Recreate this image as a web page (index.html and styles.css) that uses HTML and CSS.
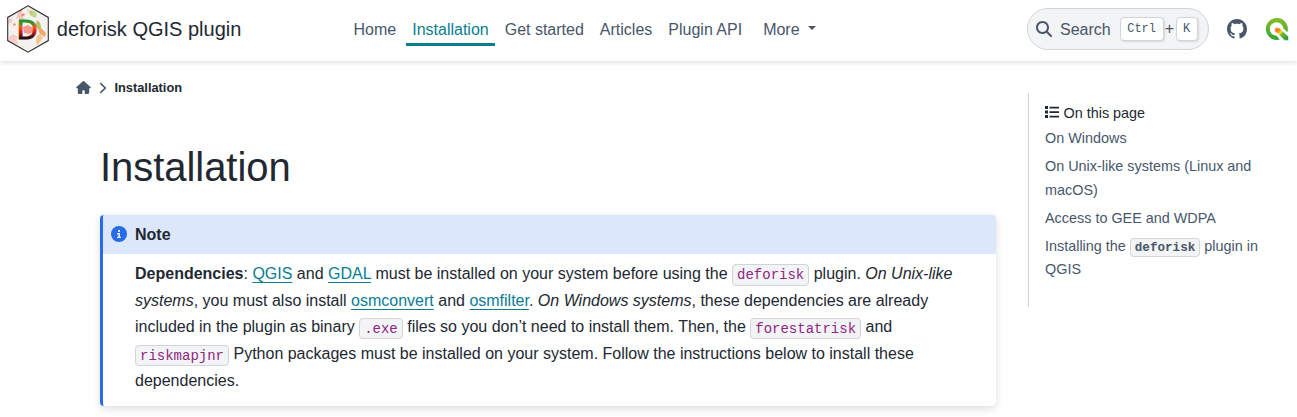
FILE: index.html
```html
<!DOCTYPE html>
<html lang="en">
<head>
<meta charset="utf-8">
<title>Installation — deforisk QGIS plugin</title>
<link rel="stylesheet" href="styles.css">
</head>
<body>
<header class="header">
  <a class="brand">
    <svg class="logo" viewBox="0 0 42 48">
      <defs>
        <linearGradient id="d-fill" gradientUnits="userSpaceOnUse" x1="0" y1="13.500" x2="0" y2="34.500">
          <stop offset="0" stop-color="#0e9a3a"/><stop offset="0.2" stop-color="#3a8f1c"/>
          <stop offset="0.42" stop-color="#f0560c"/><stop offset="0.62" stop-color="#d81c10"/>
          <stop offset="0.95" stop-color="#200a0a"/>
        </linearGradient>
        <clipPath id="hex"><path d="M21 .8 41.300 12.400V35.600L21 47.200.7 35.600V12.400z"/></clipPath>
        <filter id="soft"><feGaussianBlur stdDeviation=".5"/></filter>
      </defs>
      <g clip-path="url(#hex)">
        <path d="M0 0h42v48H0z" fill="#f4f2ee"/>
        <g filter="url(#soft)">
          <path d="M11 8l3-2 2 3-1 3 3 2-4 2-3-3-2 1z" fill="#f9c3bb"/>
          <path d="M1 14l3-1 2 2-2 3-3 1zM2 32l4-3 5 3-2 3 3 4-5-1-5-3z" fill="#f6cbc9"/>
          <path d="M14 10l3-2 1 2-3 2zM6 19l2-1 1 2-2 1zM12 5l2-1 1 2-2 1z" fill="#f38e80"/>
          <path d="M20 3l3 2 3 5-2 1-4-4z" fill="#e2e8c4"/>
          <path d="M25 5l4 2 1 4-2 2-4-2-2-3z" fill="#b9dc92"/>
          <path d="M23 5l2 1 1 3-2 1z" fill="#f6af72"/>
          <path d="M30 15l3 3 1 5 5 5-1 4-5-3-2-5-3-3z" fill="#f4a868"/>
          <path d="M31 16l2 2 1 5-2 1-2-4z" fill="#a2cc70"/>
          <path d="M30 31l3-2 3 4-3 4-3 3-1-4z" fill="#f9c48a"/>
          <path d="M16 22l5-2 5 3v4l-4 2-5-1z" fill="#f29a90"/>
        </g>
      </g>
      <text x="9.900" y="34" textLength="20.500" lengthAdjust="spacingAndGlyphs" class="logo-letter" fill="url(#d-fill)" stroke="url(#d-fill)" stroke-width=".9">D</text>
      <path d="M21 .8 41.300 12.400V35.600L21 47.200.7 35.600V12.400z" fill="none" stroke="#302f2d" stroke-width="1.100"/>
    </svg>
    <span>deforisk QGIS plugin</span>
  </a>
  <nav class="nav">
    <a>Home</a><a class="current">Installation</a><a>Get started</a><a>Articles</a><a>Plugin API</a><a class="more">More<i class="caret"></i></a>
  </nav>
  <div class="tools">
    <div class="search">
      <svg class="glass" viewBox="0 0 512 512"><path fill="currentColor" d="M416 208c0 45.900-14.900 88.300-40 122.700L502.600 457.400c12.500 12.500 12.500 32.800 0 45.300s-32.800 12.500-45.300 0L330.700 376c-34.400 25.200-76.800 40-122.700 40C93.100 416 0 322.900 0 208S93.100 0 208 0S416 93.100 416 208zM208 352a144 144 0 1 0 0-288 144 144 0 1 0 0 288z"/></svg>
      <span class="search-label">Search</span>
      <kbd>Ctrl</kbd><span class="plus">+</span><kbd>K</kbd>
    </div>
    <svg class="github" viewBox="0 0 16 16"><path fill="currentColor" d="M8 0C3.580 0 0 3.580 0 8c0 3.540 2.290 6.530 5.470 7.590.4.070.55-.17.55-.38 0-.19-.01-.82-.01-1.490-2.010.37-2.530-.49-2.690-.94-.09-.23-.48-.94-.82-1.130-.28-.15-.68-.52-.01-.53.63-.01 1.080.58 1.230.82.72 1.210 1.870.87 2.330.66.07-.52.28-.87.51-1.070-1.780-.2-3.640-.89-3.640-3.950 0-.87.31-1.590.82-2.150-.08-.2-.36-1.020.08-2.120 0 0 .67-.21 2.200.82.64-.18 1.320-.27 2-.27s1.360.09 2 .27c1.530-1.040 2.200-.82 2.200-.82.44 1.100.16 1.920.08 2.120.51.56.82 1.270.82 2.150 0 3.070-1.870 3.750-3.650 3.950.29.25.54.73.54 1.480 0 1.070-.01 1.930-.01 2.200 0 .21.15.46.55.38A8.010 8.010 0 0 0 16 8c0-4.420-3.580-8-8-8z"/></svg>
    <svg class="qgis" viewBox="0 0 24 23">
      <defs>
        <linearGradient id="q-green" x1="0" y1="0" x2="0" y2="1"><stop stop-color="#89bd28"/><stop offset="1" stop-color="#30a638"/></linearGradient>
        <linearGradient id="q-tail" gradientUnits="userSpaceOnUse" x1="10" y1="10" x2="22" y2="22"><stop stop-color="#ee7913"/><stop offset=".25" stop-color="#f08a24"/><stop offset=".42" stop-color="#f0dc35"/><stop offset=".55" stop-color="#70b62c"/><stop offset="1" stop-color="#229840"/></linearGradient>
      </defs>
      <path d="M14.700 21.600A11 11 0 1 1 22.400 14.200L18.300 10.300A6.800 6.800 0 1 0 11.700 17.800z" fill="url(#q-green)"/>
      <path d="M9.800 9.800h4.300l9.400 8.800V22.400h-3.800L13.200 16l-3.400-2.600z" fill="url(#q-tail)" stroke="#fff" stroke-width=".5"/>
    </svg>
  </div>
</header>

<div class="page">
  <main class="main">
    <nav class="crumbs">
      <svg class="home" viewBox="0 0 576 512"><path fill="currentColor" d="M575.800 255.500c0 18-15 32.100-32 32.100h-32l.7 160.200c0 35-20 64.200-48.500 64.200H360c-22 0-24-18-24-24v-88c0-18-14-32-32-32h-32c-18 0-32 14-32 32v88c0 13-11 24-24 24H112c-27 0-48-21-48-48V287.600H32c-18 0-32-14-32-32.100 0-9 3-17 10-24L266.400 8c7-7 15-8 22-8s15 2 21 7l255.400 224.500c8 7 12 15 11 24z"/></svg>
      <svg class="chevron" viewBox="0 0 8 12"><path d="M1.300 1.200 6.300 6l-5 4.800" fill="none" stroke="currentColor" stroke-width="1.600"/></svg>
      <b>Installation</b>
    </nav>
    <article class="article">
      <h1>Installation</h1>
      <section class="note">
        <div class="note-title">
          <svg class="info" viewBox="0 0 16 16"><circle cx="8" cy="8" r="8" fill="#276be9"/><path fill="#dce7fc" d="M7 4h2v2H7zM6 7h3v3.700h1V12H6v-1.300h1.300V8.400H6z"/></svg>
          <span>Note</span>
        </div>
        <p><strong>Dependencies</strong>: <a>QGIS</a> and <a>GDAL</a> must be installed on your system before using the <code>deforisk</code> plugin. <em>On Unix-like systems</em>, you must also install <a>osmconvert</a> and <a>osmfilter</a>. <em>On Windows systems</em>, these dependencies are already included in the plugin as binary <code>.exe</code> files so you don’t need to install them. Then, the <code>forestatrisk</code> and <code>riskmapjnr</code> Python packages must be installed on your system. Follow the instructions below to install these dependencies.</p>
      </section>
    </article>
  </main>
  <aside class="toc">
    <div class="toc-title"><svg class="list" viewBox="0 0 14 12"><path fill="currentColor" d="M0 0h3v3H0zM0 4.500h3v3H0zM0 9h3v3H0zM4.500.7H14v1.700H4.500zM4.500 5.200H14v1.700H4.500zM4.500 9.700H14v1.700H4.500z"/></svg>On this page</div>
    <a>On Windows</a>
    <a>On Unix-like systems (Linux and macOS)</a>
    <a>Access to GEE and WDPA</a>
    <a>Installing the <code>deforisk</code> plugin in QGIS</a>
  </aside>
</div>
</body>
</html>
```
FILE: styles.css
```css
* { box-sizing: border-box; }
body {
  margin: 0;
  height: 417px;
  overflow: hidden;
  background: #fff;
  color: #222832;
  font: 16px/1.65 "Liberation Sans", Arial, sans-serif;
}
svg { display: block; flex: none; }
code, kbd { font-family: "Liberation Mono", monospace; }

.header {
  display: flex;
  align-items: center;
  height: 61px;
  padding: 0 8px 3px 7px;
  box-shadow: 0 2px 4px 0 #e2e2e2;
  color: #48566b;
}
.brand {
  display: flex;
  align-items: center;
  gap: 7.800px;
  width: 338.500px;
  font-size: 20px;
  color: #222832;
  white-space: nowrap;
}
.logo { width: 42px; height: 48px; }
.logo-letter { font: 28px "Liberation Sans", Arial, sans-serif; }
.nav { display: flex; white-space: nowrap; }
.nav a { padding: 3px 8px 1px; line-height: 26px; }
.nav .current {
  color: #0a7d91;
  padding: 3px 6px 0;
  margin: 0 2px;
  box-shadow: 0 2px 0 #0a7d91;
  border-bottom: 1px solid #0a7d91;
}
.nav .more { display: flex; align-items: center; gap: 8px; padding-left: 13px; }
.caret { border: 4.500px solid transparent; border-top-color: currentColor; border-bottom: 0; margin-top: -4px; }
.tools { display: flex; align-items: center; margin-left: auto; }
.search {
  display: flex;
  align-items: center;
  width: 182px;
  height: 42px;
  padding: 0 10px 0 8px;
  border: 1px solid #d1d5da;
  border-radius: 21px;
  background: #f3f4f5;
}
.glass { width: 16px; height: 16px; }
.search-label { margin: 0 9px 0 8px; padding-top: 2px; line-height: 26px; }
kbd {
  height: 24px;
  padding: 0 6.500px;
  border: 1px solid #d1d5da;
  border-radius: 4px;
  background: #fff;
  box-shadow: 1px 1px 2px #d8d8d8;
  font-size: 12px;
  line-height: 22px;
}
.plus { width: 12px; text-align: center; }
.github { width: 20px; height: 20px; margin-left: 18px; }
.qgis { width: 24px; height: 23px; margin: 0 0 0 18px; }

.page { display: flex; }
.main { width: 1028px; padding: 14px 32px 0 76px; }
.crumbs { display: flex; align-items: center; height: 26px; font-size: 12.800px; color: #48566b; }
.home { width: 15px; height: 13px; margin-top: -1px; }
.chevron { width: 8px; height: 12px; margin: -1px 7.500px 0 8px; }
.crumbs b { color: #222832; }
.article { padding: 43px 0 0 24px; }
h1 { margin: 0; font-size: 40px; font-weight: 400; line-height: 46px; letter-spacing: -0.05px; }
.note {
  margin-top: 25px;
  height: 191px;
  border-left: 3px solid #276be9;
  border-radius: 4px;
  box-shadow: 0 3px 8px #e0e0e0, 0 0 1px #d8d8d8;
  overflow: hidden;
}
.note-title {
  display: flex;
  align-items: center;
  gap: 8px;
  height: 39px;
  padding: 0 0 1px 8px;
  background: #dce7fc;
  font-weight: 700;
}
.note-title span { padding-top: 2px; }
.info { width: 16px; height: 16px; }
.note p { margin: 7px 9.600px 0 32px; line-height: 26.700px; }
.note p a { color: #0a7d91; text-decoration: underline; text-decoration-thickness: 1px; text-underline-offset: 3px; }
code {
  padding: 1.600px 4px;
  border: 1px solid #d1d5da;
  border-radius: 4px;
  background: #f3f4f5;
  color: #912583;
  font-size: 14px;
  line-height: 1;
}
.toc {
  display: flex;
  flex-direction: column;
  gap: 4px;
  width: 236px;
  height: 214px;
  margin-top: 32px;
  padding: 8.600px 0 0 16px;
  border-left: 1px solid #d1d5da;
  color: #48566b;
  font-size: 14.400px;
  line-height: 23.800px;
}
.toc-title { display: flex; align-items: center; gap: 4.500px; margin-bottom: -2px; color: #222832; }
.list { width: 14px; height: 12px; margin-top: -2px; }
.toc code { color: #48566b; font-size: 12.600px; font-weight: 700; }
```
